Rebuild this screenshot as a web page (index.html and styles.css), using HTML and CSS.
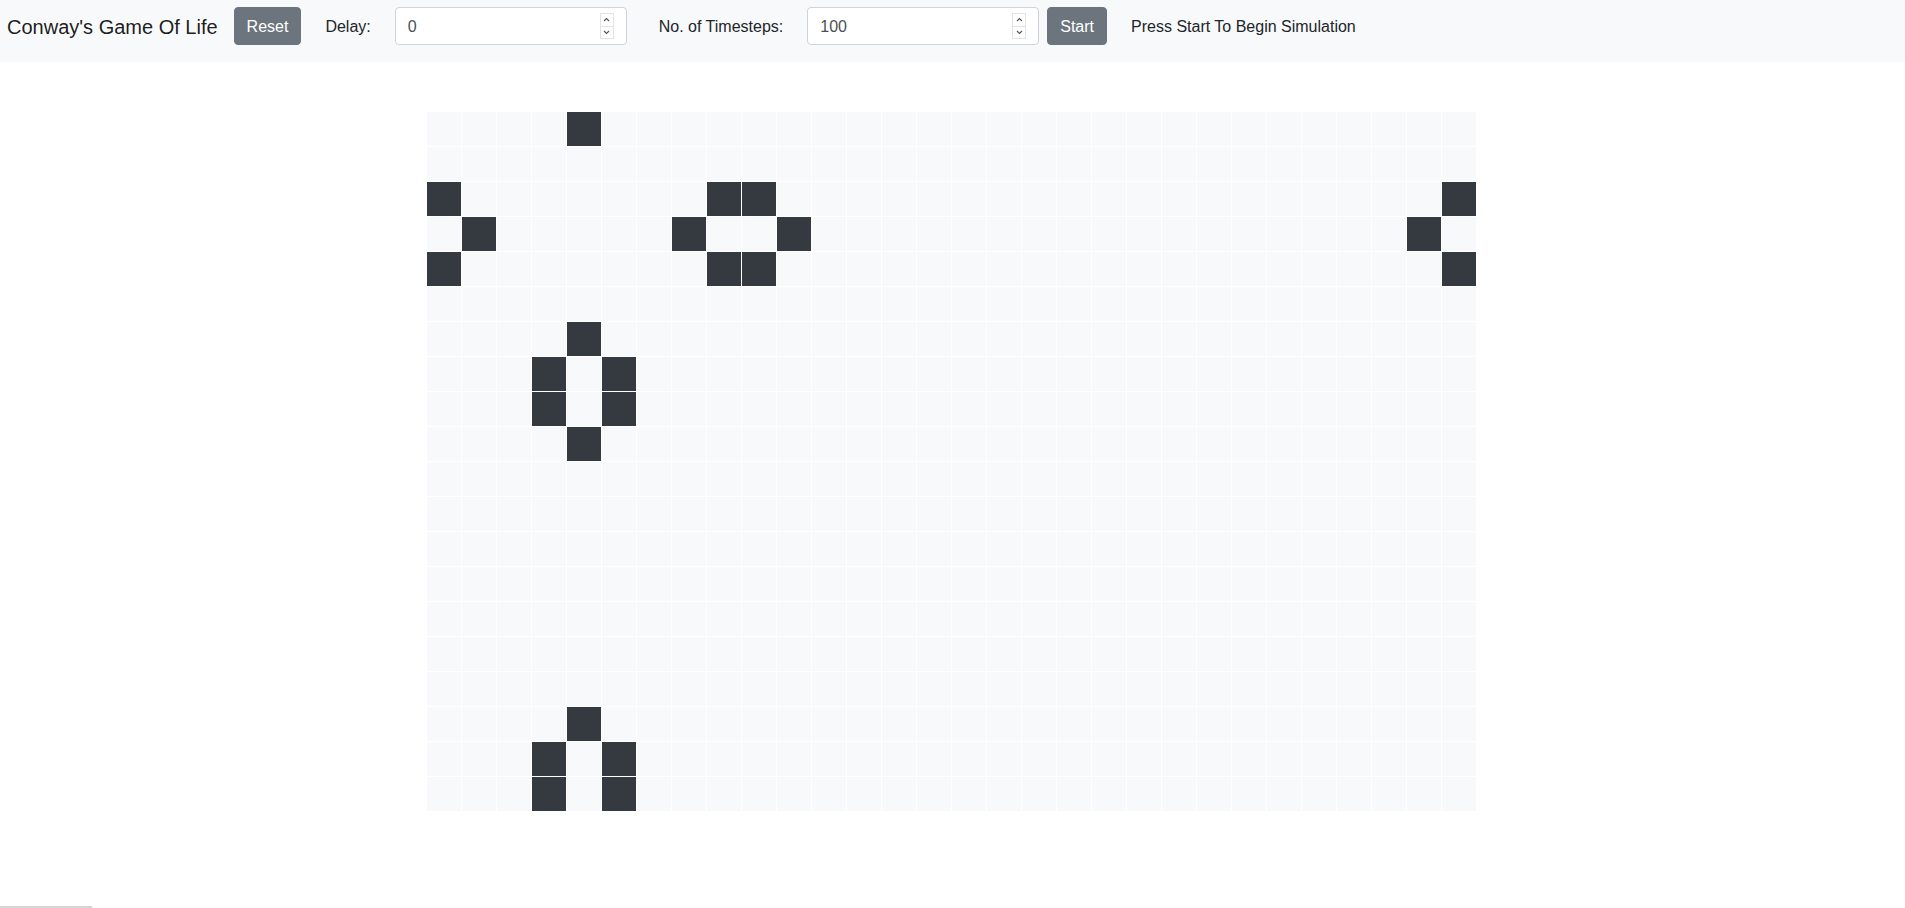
FILE: index.html
```html
<!DOCTYPE html>
<html lang="en">
<head>
<meta charset="utf-8">
<title>Conway's Game Of Life</title>
<link rel="stylesheet" href="styles.css">
</head>
<body>
<nav class="navbar">
  <span class="brand">Conway's Game Of Life</span>
  <button class="btn btn-reset">Reset</button>
  <label class="lbl lbl-delay">Delay:</label>
  <span class="num num-delay">
    <input class="field" type="number" value="0">
    <span class="spin">
      <span class="spin-btn"><svg width="7" height="5" viewBox="0 0 7 5"><polyline points="1,4 3.5,1.5 6,4" fill="none" stroke="#555" stroke-width="1.1"/></svg></span>
      <span class="spin-btn"><svg width="7" height="5" viewBox="0 0 7 5"><polyline points="1,1 3.5,3.5 6,1" fill="none" stroke="#555" stroke-width="1.1"/></svg></span>
    </span>
  </span>
  <label class="lbl lbl-steps">No. of Timesteps:</label>
  <span class="num num-steps">
    <input class="field" type="number" value="100">
    <span class="spin">
      <span class="spin-btn"><svg width="7" height="5" viewBox="0 0 7 5"><polyline points="1,4 3.5,1.5 6,4" fill="none" stroke="#555" stroke-width="1.1"/></svg></span>
      <span class="spin-btn"><svg width="7" height="5" viewBox="0 0 7 5"><polyline points="1,1 3.5,3.5 6,1" fill="none" stroke="#555" stroke-width="1.1"/></svg></span>
    </span>
  </span>
  <button class="btn btn-start">Start</button>
  <span class="status">Press Start To Begin Simulation</span>
</nav>
<main class="board">
<span class="c"></span><span class="c"></span><span class="c"></span><span class="c"></span><span class="c on"></span><span class="c"></span><span class="c"></span><span class="c"></span><span class="c"></span><span class="c"></span><span class="c"></span><span class="c"></span><span class="c"></span><span class="c"></span><span class="c"></span><span class="c"></span><span class="c"></span><span class="c"></span><span class="c"></span><span class="c"></span><span class="c"></span><span class="c"></span><span class="c"></span><span class="c"></span><span class="c"></span><span class="c"></span><span class="c"></span><span class="c"></span><span class="c"></span><span class="c"></span>
<span class="c"></span><span class="c"></span><span class="c"></span><span class="c"></span><span class="c"></span><span class="c"></span><span class="c"></span><span class="c"></span><span class="c"></span><span class="c"></span><span class="c"></span><span class="c"></span><span class="c"></span><span class="c"></span><span class="c"></span><span class="c"></span><span class="c"></span><span class="c"></span><span class="c"></span><span class="c"></span><span class="c"></span><span class="c"></span><span class="c"></span><span class="c"></span><span class="c"></span><span class="c"></span><span class="c"></span><span class="c"></span><span class="c"></span><span class="c"></span>
<span class="c on"></span><span class="c"></span><span class="c"></span><span class="c"></span><span class="c"></span><span class="c"></span><span class="c"></span><span class="c"></span><span class="c on"></span><span class="c on"></span><span class="c"></span><span class="c"></span><span class="c"></span><span class="c"></span><span class="c"></span><span class="c"></span><span class="c"></span><span class="c"></span><span class="c"></span><span class="c"></span><span class="c"></span><span class="c"></span><span class="c"></span><span class="c"></span><span class="c"></span><span class="c"></span><span class="c"></span><span class="c"></span><span class="c"></span><span class="c on"></span>
<span class="c"></span><span class="c on"></span><span class="c"></span><span class="c"></span><span class="c"></span><span class="c"></span><span class="c"></span><span class="c on"></span><span class="c"></span><span class="c"></span><span class="c on"></span><span class="c"></span><span class="c"></span><span class="c"></span><span class="c"></span><span class="c"></span><span class="c"></span><span class="c"></span><span class="c"></span><span class="c"></span><span class="c"></span><span class="c"></span><span class="c"></span><span class="c"></span><span class="c"></span><span class="c"></span><span class="c"></span><span class="c"></span><span class="c on"></span><span class="c"></span>
<span class="c on"></span><span class="c"></span><span class="c"></span><span class="c"></span><span class="c"></span><span class="c"></span><span class="c"></span><span class="c"></span><span class="c on"></span><span class="c on"></span><span class="c"></span><span class="c"></span><span class="c"></span><span class="c"></span><span class="c"></span><span class="c"></span><span class="c"></span><span class="c"></span><span class="c"></span><span class="c"></span><span class="c"></span><span class="c"></span><span class="c"></span><span class="c"></span><span class="c"></span><span class="c"></span><span class="c"></span><span class="c"></span><span class="c"></span><span class="c on"></span>
<span class="c"></span><span class="c"></span><span class="c"></span><span class="c"></span><span class="c"></span><span class="c"></span><span class="c"></span><span class="c"></span><span class="c"></span><span class="c"></span><span class="c"></span><span class="c"></span><span class="c"></span><span class="c"></span><span class="c"></span><span class="c"></span><span class="c"></span><span class="c"></span><span class="c"></span><span class="c"></span><span class="c"></span><span class="c"></span><span class="c"></span><span class="c"></span><span class="c"></span><span class="c"></span><span class="c"></span><span class="c"></span><span class="c"></span><span class="c"></span>
<span class="c"></span><span class="c"></span><span class="c"></span><span class="c"></span><span class="c on"></span><span class="c"></span><span class="c"></span><span class="c"></span><span class="c"></span><span class="c"></span><span class="c"></span><span class="c"></span><span class="c"></span><span class="c"></span><span class="c"></span><span class="c"></span><span class="c"></span><span class="c"></span><span class="c"></span><span class="c"></span><span class="c"></span><span class="c"></span><span class="c"></span><span class="c"></span><span class="c"></span><span class="c"></span><span class="c"></span><span class="c"></span><span class="c"></span><span class="c"></span>
<span class="c"></span><span class="c"></span><span class="c"></span><span class="c on"></span><span class="c"></span><span class="c on"></span><span class="c"></span><span class="c"></span><span class="c"></span><span class="c"></span><span class="c"></span><span class="c"></span><span class="c"></span><span class="c"></span><span class="c"></span><span class="c"></span><span class="c"></span><span class="c"></span><span class="c"></span><span class="c"></span><span class="c"></span><span class="c"></span><span class="c"></span><span class="c"></span><span class="c"></span><span class="c"></span><span class="c"></span><span class="c"></span><span class="c"></span><span class="c"></span>
<span class="c"></span><span class="c"></span><span class="c"></span><span class="c on"></span><span class="c"></span><span class="c on"></span><span class="c"></span><span class="c"></span><span class="c"></span><span class="c"></span><span class="c"></span><span class="c"></span><span class="c"></span><span class="c"></span><span class="c"></span><span class="c"></span><span class="c"></span><span class="c"></span><span class="c"></span><span class="c"></span><span class="c"></span><span class="c"></span><span class="c"></span><span class="c"></span><span class="c"></span><span class="c"></span><span class="c"></span><span class="c"></span><span class="c"></span><span class="c"></span>
<span class="c"></span><span class="c"></span><span class="c"></span><span class="c"></span><span class="c on"></span><span class="c"></span><span class="c"></span><span class="c"></span><span class="c"></span><span class="c"></span><span class="c"></span><span class="c"></span><span class="c"></span><span class="c"></span><span class="c"></span><span class="c"></span><span class="c"></span><span class="c"></span><span class="c"></span><span class="c"></span><span class="c"></span><span class="c"></span><span class="c"></span><span class="c"></span><span class="c"></span><span class="c"></span><span class="c"></span><span class="c"></span><span class="c"></span><span class="c"></span>
<span class="c"></span><span class="c"></span><span class="c"></span><span class="c"></span><span class="c"></span><span class="c"></span><span class="c"></span><span class="c"></span><span class="c"></span><span class="c"></span><span class="c"></span><span class="c"></span><span class="c"></span><span class="c"></span><span class="c"></span><span class="c"></span><span class="c"></span><span class="c"></span><span class="c"></span><span class="c"></span><span class="c"></span><span class="c"></span><span class="c"></span><span class="c"></span><span class="c"></span><span class="c"></span><span class="c"></span><span class="c"></span><span class="c"></span><span class="c"></span>
<span class="c"></span><span class="c"></span><span class="c"></span><span class="c"></span><span class="c"></span><span class="c"></span><span class="c"></span><span class="c"></span><span class="c"></span><span class="c"></span><span class="c"></span><span class="c"></span><span class="c"></span><span class="c"></span><span class="c"></span><span class="c"></span><span class="c"></span><span class="c"></span><span class="c"></span><span class="c"></span><span class="c"></span><span class="c"></span><span class="c"></span><span class="c"></span><span class="c"></span><span class="c"></span><span class="c"></span><span class="c"></span><span class="c"></span><span class="c"></span>
<span class="c"></span><span class="c"></span><span class="c"></span><span class="c"></span><span class="c"></span><span class="c"></span><span class="c"></span><span class="c"></span><span class="c"></span><span class="c"></span><span class="c"></span><span class="c"></span><span class="c"></span><span class="c"></span><span class="c"></span><span class="c"></span><span class="c"></span><span class="c"></span><span class="c"></span><span class="c"></span><span class="c"></span><span class="c"></span><span class="c"></span><span class="c"></span><span class="c"></span><span class="c"></span><span class="c"></span><span class="c"></span><span class="c"></span><span class="c"></span>
<span class="c"></span><span class="c"></span><span class="c"></span><span class="c"></span><span class="c"></span><span class="c"></span><span class="c"></span><span class="c"></span><span class="c"></span><span class="c"></span><span class="c"></span><span class="c"></span><span class="c"></span><span class="c"></span><span class="c"></span><span class="c"></span><span class="c"></span><span class="c"></span><span class="c"></span><span class="c"></span><span class="c"></span><span class="c"></span><span class="c"></span><span class="c"></span><span class="c"></span><span class="c"></span><span class="c"></span><span class="c"></span><span class="c"></span><span class="c"></span>
<span class="c"></span><span class="c"></span><span class="c"></span><span class="c"></span><span class="c"></span><span class="c"></span><span class="c"></span><span class="c"></span><span class="c"></span><span class="c"></span><span class="c"></span><span class="c"></span><span class="c"></span><span class="c"></span><span class="c"></span><span class="c"></span><span class="c"></span><span class="c"></span><span class="c"></span><span class="c"></span><span class="c"></span><span class="c"></span><span class="c"></span><span class="c"></span><span class="c"></span><span class="c"></span><span class="c"></span><span class="c"></span><span class="c"></span><span class="c"></span>
<span class="c"></span><span class="c"></span><span class="c"></span><span class="c"></span><span class="c"></span><span class="c"></span><span class="c"></span><span class="c"></span><span class="c"></span><span class="c"></span><span class="c"></span><span class="c"></span><span class="c"></span><span class="c"></span><span class="c"></span><span class="c"></span><span class="c"></span><span class="c"></span><span class="c"></span><span class="c"></span><span class="c"></span><span class="c"></span><span class="c"></span><span class="c"></span><span class="c"></span><span class="c"></span><span class="c"></span><span class="c"></span><span class="c"></span><span class="c"></span>
<span class="c"></span><span class="c"></span><span class="c"></span><span class="c"></span><span class="c"></span><span class="c"></span><span class="c"></span><span class="c"></span><span class="c"></span><span class="c"></span><span class="c"></span><span class="c"></span><span class="c"></span><span class="c"></span><span class="c"></span><span class="c"></span><span class="c"></span><span class="c"></span><span class="c"></span><span class="c"></span><span class="c"></span><span class="c"></span><span class="c"></span><span class="c"></span><span class="c"></span><span class="c"></span><span class="c"></span><span class="c"></span><span class="c"></span><span class="c"></span>
<span class="c"></span><span class="c"></span><span class="c"></span><span class="c"></span><span class="c on"></span><span class="c"></span><span class="c"></span><span class="c"></span><span class="c"></span><span class="c"></span><span class="c"></span><span class="c"></span><span class="c"></span><span class="c"></span><span class="c"></span><span class="c"></span><span class="c"></span><span class="c"></span><span class="c"></span><span class="c"></span><span class="c"></span><span class="c"></span><span class="c"></span><span class="c"></span><span class="c"></span><span class="c"></span><span class="c"></span><span class="c"></span><span class="c"></span><span class="c"></span>
<span class="c"></span><span class="c"></span><span class="c"></span><span class="c on"></span><span class="c"></span><span class="c on"></span><span class="c"></span><span class="c"></span><span class="c"></span><span class="c"></span><span class="c"></span><span class="c"></span><span class="c"></span><span class="c"></span><span class="c"></span><span class="c"></span><span class="c"></span><span class="c"></span><span class="c"></span><span class="c"></span><span class="c"></span><span class="c"></span><span class="c"></span><span class="c"></span><span class="c"></span><span class="c"></span><span class="c"></span><span class="c"></span><span class="c"></span><span class="c"></span>
<span class="c"></span><span class="c"></span><span class="c"></span><span class="c on"></span><span class="c"></span><span class="c on"></span><span class="c"></span><span class="c"></span><span class="c"></span><span class="c"></span><span class="c"></span><span class="c"></span><span class="c"></span><span class="c"></span><span class="c"></span><span class="c"></span><span class="c"></span><span class="c"></span><span class="c"></span><span class="c"></span><span class="c"></span><span class="c"></span><span class="c"></span><span class="c"></span><span class="c"></span><span class="c"></span><span class="c"></span><span class="c"></span><span class="c"></span><span class="c"></span>
</main>
<div class="footer-rule"></div>
</body>
</html>
```

FILE: styles.css
```css
* { box-sizing: border-box; }
html, body { margin: 0; padding: 0; }
body {
  font-family: "Liberation Sans", Arial, sans-serif;
  font-size: 16px;
  line-height: 1.5;
  color: #212529;
  background: #fff;
}
.navbar {
  display: flex;
  align-items: center;
  height: 62px;
  padding: 7px 0 17px 7px;
  background: #f8f9fa;
}
.brand {
  font-size: 20px;
  line-height: 30px;
  padding-top: 2px;
  color: rgba(0, 0, 0, 0.9);
  margin-right: 16px;
  white-space: nowrap;
}
.btn {
  font-family: inherit;
  font-size: 16px;
  line-height: 24px;
  height: 38px;
  padding: 7px 12px 5px;
  color: #fff;
  background: #6c757d;
  border: 1px solid #6c757d;
  border-radius: 4px;
}
.btn-reset { margin-right: 24px; }
.btn-start { margin-right: 24px; }
.lbl { white-space: nowrap; padding-top: 2px; }
.lbl-delay { margin-right: 24px; }
.lbl-steps { margin-right: 24px; }
.num {
  position: relative;
  display: block;
  width: 232px;
  height: 38px;
}
.num-delay { margin-right: 32px; }
.num-steps { margin-right: 8px; }
.field {
  display: block;
  font-family: inherit;
  font-size: 16px;
  line-height: 24px;
  height: 38px;
  width: 232px;
  padding: 7px 12px 5px;
  color: #495057;
  background: #fff;
  border: 1px solid #ced4da;
  border-radius: 4px;
  appearance: textfield;
  -moz-appearance: textfield;
}
.field::-webkit-inner-spin-button,
.field::-webkit-outer-spin-button {
  -webkit-appearance: none;
  margin: 0;
}
.spin {
  position: absolute;
  top: 6px;
  right: 13px;
  width: 14px;
  height: 26px;
  display: flex;
  flex-direction: column;
}
.spin-btn {
  flex: 1;
  display: flex;
  align-items: center;
  justify-content: center;
  border: 1px solid #e3e3e3;
  background: #fff;
}
.spin-btn + .spin-btn { border-top: none; }
.status { white-space: nowrap; padding-top: 2px; }
.board {
  display: grid;
  grid-template-columns: repeat(30, 35px);
  grid-auto-rows: 35px;
  width: 1051px;
  margin: 50px auto 0;
}
.c {
  display: block;
  background: #f8f9fa;
  border-right: 1px solid #fff;
  border-bottom: 1px solid #fff;
}
.c.on { background: #343a40; }
.footer-rule {
  width: 92px;
  height: 2px;
  margin-top: 94px;
  background: #d6d6d6;
}
```
